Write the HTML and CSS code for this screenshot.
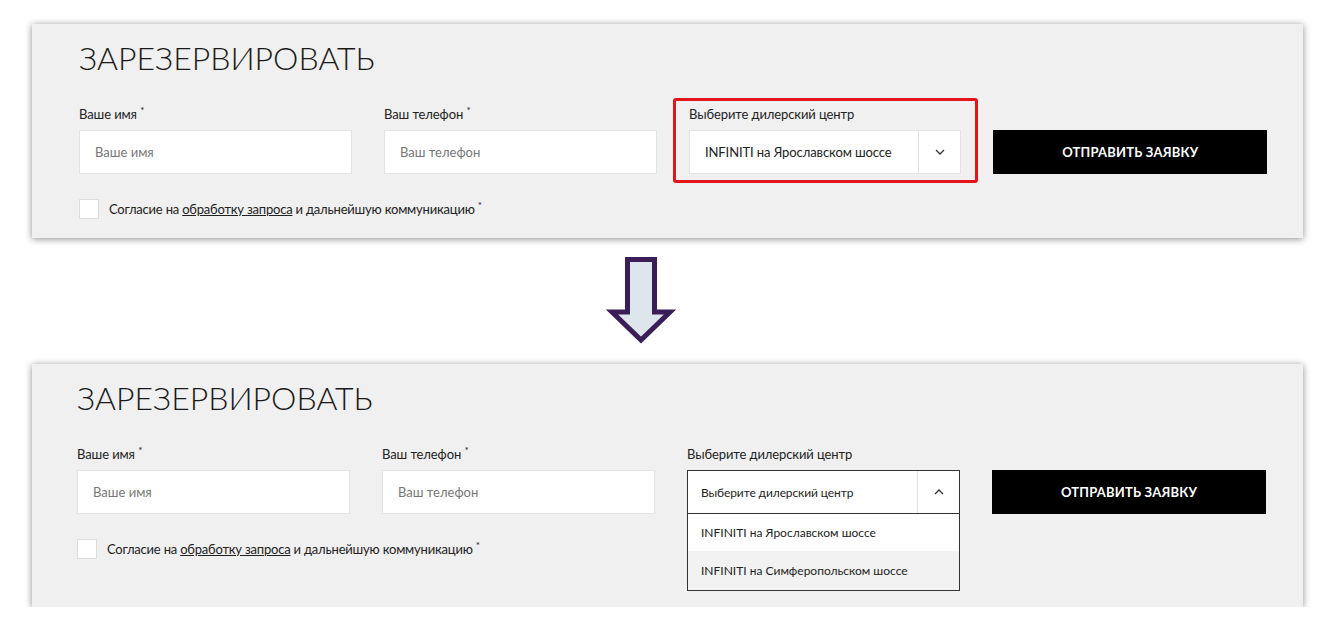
FILE: index.html
```html
<!DOCTYPE html>
<html lang="ru">
<head>
  <meta charset="UTF-8" />
  <title>Зарезервировать</title>
  <link rel="stylesheet" href="styles.css">
</head>
<body>
  <div class="page">

    <section class="booking">
      <h2 class="booking-title">ЗАРЕЗЕРВИРОВАТЬ</h2>
      <div class="booking-form">
        <div class="booking-main">
          <div class="booking-fields">
            <div class="field">
              <div class="field-label">Ваше имя <sup>*</sup></div>
              <div class="field-input">Ваше имя</div>
            </div>
            <div class="field">
              <div class="field-label">Ваш телефон <sup>*</sup></div>
              <div class="field-input">Ваш телефон</div>
            </div>
          </div>
          <div class="consent">
            <span class="consent-box"></span>
            <span>Согласие на <a href="#">обработку запроса</a> и дальнейшую коммуникацию <sup>*</sup></span>
          </div>
        </div>
        <div class="field field-highlight">
          <div class="field-label">Выберите дилерский центр</div>
          <div class="select">
            <div class="select-head">
              <span class="select-value">INFINITI на Ярославском шоссе</span>
              <span class="select-toggle">
                <svg width="10" height="6" viewBox="0 0 10 6"><polyline points="1,1 5,5 9,1" fill="none" stroke="#333" stroke-width="1.3"/></svg>
              </span>
            </div>
          </div>
        </div>
        <button class="submit">ОТПРАВИТЬ ЗАЯВКУ</button>
      </div>
    </section>

    <div class="step-arrow">
      <svg width="72" height="90" viewBox="0 0 72 90">
        <polygon points="22.5,4.5 49.5,4.5 49.5,57 65,57 36,85 7,57 22.5,57" fill="#dde6ec" stroke="#3b1d58" stroke-width="5"/>
      </svg>
    </div>

    <section class="booking booking-open">
      <h2 class="booking-title">ЗАРЕЗЕРВИРОВАТЬ</h2>
      <div class="booking-form">
        <div class="booking-main">
          <div class="booking-fields">
            <div class="field">
              <div class="field-label">Ваше имя <sup>*</sup></div>
              <div class="field-input">Ваше имя</div>
            </div>
            <div class="field">
              <div class="field-label">Ваш телефон <sup>*</sup></div>
              <div class="field-input">Ваш телефон</div>
            </div>
          </div>
          <div class="consent">
            <span class="consent-box"></span>
            <span>Согласие на <a href="#">обработку запроса</a> и дальнейшую коммуникацию <sup>*</sup></span>
          </div>
        </div>
        <div class="field">
          <div class="field-label">Выберите дилерский центр</div>
          <div class="select select-open">
            <div class="select-head">
              <span class="select-value">Выберите дилерский центр</span>
              <span class="select-toggle">
                <svg width="10" height="6" viewBox="0 0 10 6"><polyline points="1,5 5,1 9,5" fill="none" stroke="#333" stroke-width="1.3"/></svg>
              </span>
            </div>
            <ul class="select-list">
              <li>INFINITI на Ярославском шоссе</li>
              <li class="hover">INFINITI на Симферопольском шоссе</li>
            </ul>
          </div>
        </div>
        <button class="submit">ОТПРАВИТЬ ЗАЯВКУ</button>
      </div>
    </section>

  </div>
</body>
</html>
```

FILE: styles.css
```css
body {
  margin: 0;
  background: #fff;
  color: #222;
  font-family: "Lato", "Liberation Sans", sans-serif;
}

.page {
  padding: 24px 0 0 32px;
}

.booking {
  width: 1271px;
  box-sizing: border-box;
  background: #f0f0f0;
  box-shadow: 0 1px 7px rgba(0, 0, 0, 0.45);
  padding: 14px 36px 19px 47px;
}

.booking-open {
  padding-left: 45px;
  padding-bottom: 16px;
}

.booking-title {
  margin: 0 0 28px;
  font-size: 32px;
  line-height: 40px;
  font-weight: 300;
  color: #1a1a1a;
}

.booking-form {
  display: flex;
  align-items: flex-start;
  gap: 32px;
}

.booking-fields {
  display: flex;
  gap: 32px;
}

.field {
  width: 273px;
}

.field-label {
  font-size: 13px;
  line-height: 16px;
  margin-bottom: 8px;
  color: #222;
  letter-spacing: -0.1px;
}

.field-label sup {
  font-size: 10px;
  line-height: 0;
}

.field-input {
  box-sizing: border-box;
  height: 44px;
  background: #fff;
  border: 1px solid #e2e2e2;
  padding: 0 15px;
  display: flex;
  align-items: center;
  font-size: 13px;
  color: #777;
}

.consent {
  display: flex;
  align-items: center;
  gap: 10px;
  margin-top: 25px;
  font-size: 13px;
  color: #222;
  letter-spacing: -0.2px;
}

.consent a {
  color: #222;
}

.consent sup {
  font-size: 10px;
  line-height: 0;
}

.consent-box {
  width: 20px;
  height: 20px;
  box-sizing: border-box;
  background: #fff;
  border: 1px solid #ddd;
}

.field-highlight {
  position: relative;
}

.field-highlight::after {
  content: "";
  position: absolute;
  top: -8px;
  left: -16px;
  right: -17px;
  bottom: -9px;
  border: 3px solid #e3141b;
  border-radius: 3px;
}

.select {
  background: #fff;
  border: 1px solid #e2e2e2;
}

.select-head {
  display: flex;
  height: 42px;
  align-items: stretch;
}

.select-value {
  flex: 1;
  display: flex;
  align-items: center;
  padding-left: 15px;
  font-size: 13px;
  color: #222;
  letter-spacing: -0.1px;
}

.select-toggle {
  width: 41px;
  border-left: 1px solid #e2e2e2;
  display: flex;
  align-items: center;
  justify-content: center;
}

.select-open {
  border-color: #333;
}

.select-open .select-head {
  border-bottom: 1px solid #333;
}

.select-open .select-value {
  padding-left: 13px;
  font-size: 12px;
}

.select-list {
  list-style: none;
  margin: 0;
  padding: 0;
}

.select-list li {
  height: 37px;
  display: flex;
  align-items: center;
  padding-left: 13px;
  font-size: 12px;
  color: #222;
}

.select-list li.hover {
  background: #f2f2f2;
  height: 39px;
}

.submit {
  width: 274px;
  height: 44px;
  margin-top: 24px;
  background: #000;
  color: #fff;
  border: none;
  font-family: "Lato", "Liberation Sans", sans-serif;
  font-weight: 700;
  font-size: 13px;
  letter-spacing: 0.2px;
}

.step-arrow {
  height: 109px;
  padding-left: 573px;
  padding-top: 17px;
}
```
